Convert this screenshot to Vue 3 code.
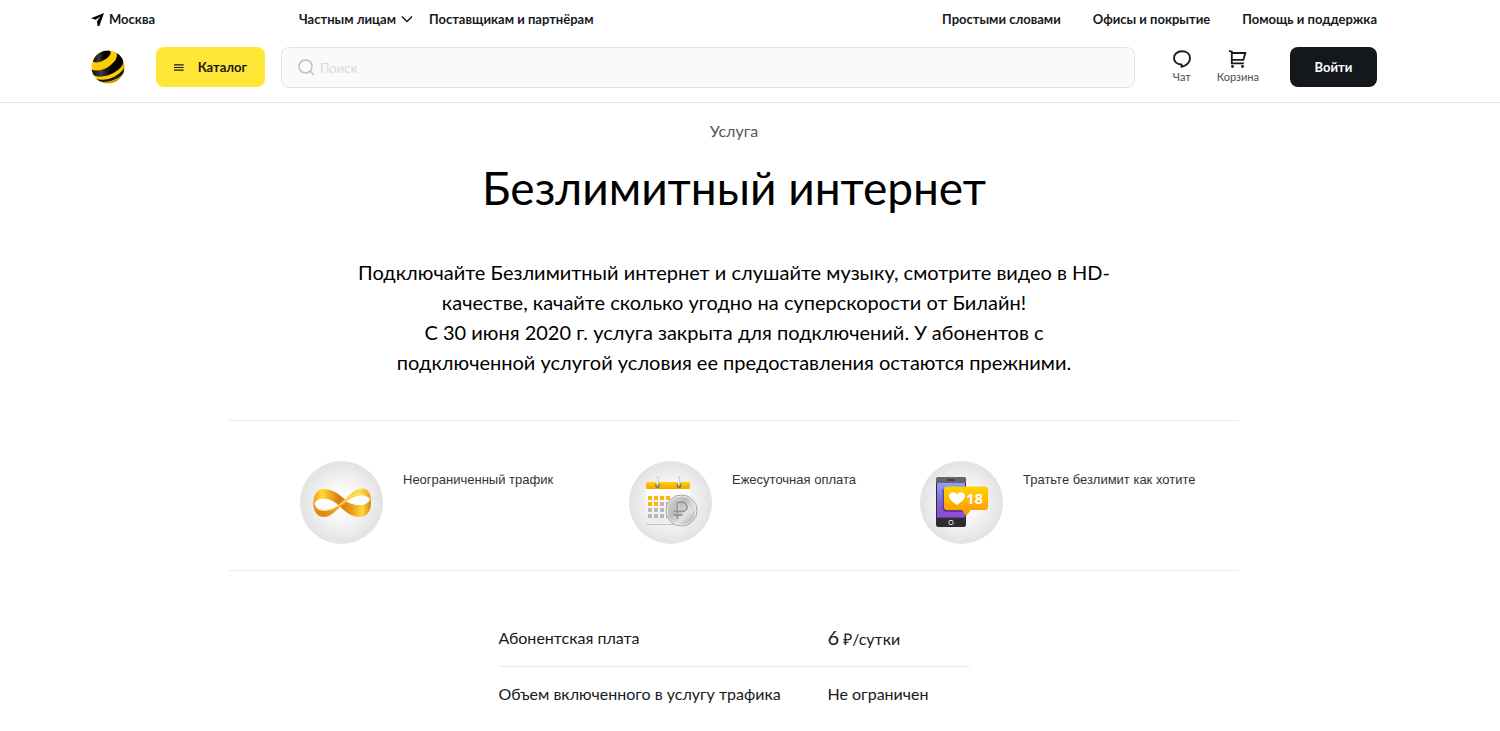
<script setup>
import { ref } from 'vue'

const query = ref('')
const mainLinks = ['Простыми словами', 'Офисы и покрытие', 'Помощь и поддержка']
const steps = [0, 1, 2, 3]
const days = steps.flatMap((row) =>
  steps.map((col) => ({ x: 19 + col * 6, y: 35 + row * 6, paid: row === 0 || (row === 1 && col < 2) }))
)
</script>

<template>
  <div class="page">
    <header class="header">
      <nav class="topbar">
        <a href="#" class="city">
          <svg width="13" height="13" viewBox="0 0 13 13" aria-hidden="true">
            <path d="M13 0 0 5.300l4.800 1.500L9.500 3.300 6 8.200l.6 4.800H8.300z" fill="#000" />
          </svg>
          Москва
        </a>
        <a href="#" class="audience">
          Частным лицам
          <svg width="12" height="8" viewBox="0 0 12 8" aria-hidden="true">
            <path d="m1 1.500 5 5 5-5" fill="none" stroke="#16191d" stroke-width="1.500" />
          </svg>
        </a>
        <a href="#">Поставщикам и партнёрам</a>
        <div class="links">
          <a v-for="link in mainLinks" :key="link" href="#">{{ link }}</a>
        </div>
      </nav>

      <div class="mainbar">
        <a href="#" class="logo" aria-label="Билайн">
          <svg width="34" height="34" viewBox="0 0 34 34">
            <defs>
              <radialGradient id="ballShade" cx=".42" cy=".4" r=".62">
                <stop offset=".8" stop-color="#000" stop-opacity="0" />
                <stop offset="1" stop-color="#000" stop-opacity=".3" />
              </radialGradient>
              <linearGradient id="ballBlack" x1="0" y1="0" x2="1" y2="0">
                <stop offset="0" stop-color="#000" />
                <stop offset=".3" stop-color="#3c3c3c" />
                <stop offset=".65" stop-color="#000" />
              </linearGradient>
              <clipPath id="ballClip"><circle cx="17" cy="17" r="16.500" /></clipPath>
            </defs>
            <g clip-path="url(#ballClip)">
              <rect width="34" height="34" fill="#ffcb05" />
              <path d="M2 11.500C4 4 10 .3 17 .3c3.500.5 3.500 3.500 0 7C13 11 6 14 2 11.500z" fill="url(#ballBlack)" />
              <path d="M0 19.500c6 2.500 13 .5 18.500-3.500C24 12 27 7.500 25.500 3L31 6.500c3.500 5.500 0 11.500-7 15.500-8 5-18 6.500-23 2z" fill="url(#ballBlack)" />
              <path d="M4 28.500c10 3.500 22-.5 29.500-10.500l-.5 5C25 31 14 33.500 6.500 31z" fill="#161616" />
              <path d="M6.500 30.500C14 33.500 22 32 29 27l-5 5.500-10 1z" fill="#ffcb05" />
              <circle cx="17" cy="17" r="16.500" fill="url(#ballShade)" />
            </g>
          </svg>
        </a>
        <button type="button" class="catalog">
          <svg width="13" height="9" viewBox="0 0 13 9" aria-hidden="true">
            <path d="M0 1h13M0 4.500h13M0 8h13" stroke="#16191d" stroke-width="1.600" />
          </svg>
          Каталог
        </button>
        <label class="search">
          <svg width="17" height="17" viewBox="0 0 17 17" aria-hidden="true">
            <circle cx="7.500" cy="7.500" r="6.500" fill="none" stroke="#bfbcc6" stroke-width="1.500" />
            <path d="m12 12 4 4" stroke="#bfbcc6" stroke-width="1.500" />
          </svg>
          <input v-model="query" type="search" placeholder="Поиск" aria-label="Поиск" />
        </label>
        <div class="actions">
          <a href="#" class="action">
            <svg width="20" height="20" viewBox="0 0 20 20" aria-hidden="true">
              <path d="M9.500 17.800v-2.300C5 15.500 2 12.700 2 9c0-3.900 3.200-6.700 8-6.700S18 5.100 18 9c0 4.300-3.500 7.500-8.500 8.800z" fill="none" stroke="#16191d" stroke-width="1.900" stroke-linejoin="round" />
            </svg>
            Чат
          </a>
          <a href="#" class="action">
            <svg width="20" height="20" viewBox="0 0 20 20" aria-hidden="true">
              <path d="m1 1.800 2.800.8v11.700h12M3.800 4h13.500l-1.900 6.800H3.800" fill="none" stroke="#16191d" stroke-width="1.800" />
              <circle cx="4.500" cy="17.500" r="1.400" fill="#16191d" />
              <circle cx="14.500" cy="17.500" r="1.400" fill="#16191d" />
            </svg>
            Корзина
          </a>
        </div>
        <button type="button" class="login">Войти</button>
      </div>
    </header>

    <main class="content">
      <p class="kind">Услуга</p>
      <h1>Безлимитный интернет</h1>
      <p class="lead">
        Подключайте Безлимитный интернет и слушайте музыку, смотрите видео в HD-<br />
        качестве, качайте сколько угодно на суперскорости от Билайн!<br />
        С 30 июня 2020 г. услуга закрыта для подключений. У абонентов с<br />
        подключенной услугой условия ее предоставления остаются прежними.
      </p>

      <ul class="features">
        <li>
          <svg class="pic" width="83" height="83" viewBox="0 0 83 83" aria-hidden="true">
            <defs>
              <radialGradient id="disc"><stop offset="0" stop-color="#fff" /><stop offset=".4" stop-color="#f8f8f8" /><stop offset="1" stop-color="#e2e2e2" /></radialGradient>
              <linearGradient id="goldA" x1="0" y1="0" x2="1" y2="0">
                <stop offset="0" stop-color="#efa41b" /><stop offset=".15" stop-color="#ffdc30" /><stop offset=".45" stop-color="#d47a12" /><stop offset=".65" stop-color="#e9961a" /><stop offset=".85" stop-color="#ffd93a" /><stop offset="1" stop-color="#d98212" />
              </linearGradient>
              <linearGradient id="goldB" x1="0" y1="0" x2="1" y2="0">
                <stop offset="0" stop-color="#d98212" /><stop offset=".2" stop-color="#e08c12" /><stop offset=".5" stop-color="#f7b822" /><stop offset=".8" stop-color="#ffe04a" /><stop offset="1" stop-color="#e9a01c" />
              </linearGradient>
            </defs>
            <circle cx="41.500" cy="41.500" r="41.500" fill="url(#disc)" />
            <path d="M13.500 42C13 33 18 28 24 28c9 0 16 6 21 10.500C50 43 55 44 60 44c6 0 9-3 10.500-6l.5 4c0 9-5 14-11 14-10 0-16-7-20-10.500C35 41 29 37 22 37.500c-4 .5-7.500 3.500-8 6.500z" fill="url(#goldA)" />
            <path d="M13.300 40C14 45 18 49 24 49c8 0 13-3.500 17-7 7-6 13-14.500 21-14.500 6 0 9 4.500 9 12.500-1-3-4-5.500-9-5.500-8 0-15 6.500-22 11.500-5 5-10 10-16 10-7 0-11-6-10.700-16z" fill="url(#goldB)" />
            <path d="M15 43c2-4 5-5.500 9-5 6 .5 10 3 14 6-5 4-10 5-14 5-5 0-8-2.500-9-6zM46 40.500c5-4 10-6 15-6s8 2.500 7 5.500c-2 3.500-6 4.500-11 3.800-5-.8-8-1.800-11-3.300z" fill="#fcfcfc" />
            <path d="M15 46c6 6 18 4 26-3.500C49 35 56 31 65 34" fill="none" stroke="#ffe889" />
          </svg>
          <span>Неограниченный трафик</span>
        </li>
        <li>
          <svg class="pic" width="83" height="83" viewBox="0 0 83 83" aria-hidden="true">
            <defs>
              <linearGradient id="coin" x1="0" y1="0" x2="1" y2="1"><stop offset="0" stop-color="#d8d8d8" /><stop offset=".4" stop-color="#bcbcbc" /><stop offset=".65" stop-color="#e2e2e2" /><stop offset="1" stop-color="#8f8f8f" /></linearGradient>
              <linearGradient id="bar" x1="0" y1="0" x2="0" y2="1"><stop offset="0" stop-color="#ffd000" /><stop offset="1" stop-color="#f5a400" /></linearGradient>
              <linearGradient id="sheet" x1="0" y1="0" x2="0" y2="1"><stop offset="0" stop-color="#fff" /><stop offset="1" stop-color="#ececec" /></linearGradient>
            </defs>
            <circle cx="41.500" cy="41.500" r="41.500" fill="url(#disc)" />
            <path d="M17 27h44v36H17z" fill="url(#sheet)" />
            <path d="M17 63.500h32" stroke="#c4c4c4" />
            <rect x="17" y="21" width="44" height="7" rx="1" fill="url(#bar)" />
            <rect v-for="(day, i) in days" :key="i" :x="day.x" :y="day.y" width="4" height="4" :fill="day.paid ? '#ffb400' : '#b7b7b7'" />
            <g fill="none" stroke="#777" stroke-width="1.500">
              <ellipse cx="28.500" cy="24.500" rx="1.500" ry="2" />
              <ellipse cx="50" cy="24.500" rx="1.500" ry="2" />
            </g>
            <path d="M28.500 17v6M50 17v6" stroke="#ccc" stroke-width="2.500" stroke-linecap="round" />
            <path d="M28 17v6M49.500 17v6" stroke="#fff" />
            <circle cx="52.500" cy="49.500" r="15.500" fill="url(#coin)" stroke="#a2a2a2" />
            <circle cx="52.500" cy="49.500" r="14.500" fill="none" stroke="#eee" />
            <path d="M49.500 58V42h5a4.500 4.500 0 0 1 0 9H45.500M45.500 54.500h9" fill="none" stroke="#eee" stroke-width="1.500" />
            <path d="M48.500 58V41.500h5a4.500 4.500 0 0 1 0 9H44.500M44.500 54h9" fill="none" stroke="#969696" stroke-width="1.800" />
          </svg>
          <span>Ежесуточная оплата</span>
        </li>
        <li>
          <svg class="pic" width="83" height="83" viewBox="0 0 83 83" aria-hidden="true">
            <defs>
              <linearGradient id="screen" x1="0" y1="0" x2="0" y2="1"><stop offset="0" stop-color="#8ca0ff" /><stop offset=".6" stop-color="#8060d0" /><stop offset="1" stop-color="#a14bea" /></linearGradient>
              <linearGradient id="bubble" x1="0" y1="0" x2="0" y2="1"><stop offset="0" stop-color="#ffd200" /><stop offset="1" stop-color="#ff9300" /></linearGradient>
            </defs>
            <circle cx="41.500" cy="41.500" r="41.500" fill="url(#disc)" />
            <rect x="16" y="16" width="30" height="50" rx="2.500" fill="#2d2d2f" />
            <path d="M16 22v-3.500q0-2.500 2.500-2.500h25q2.500 0 2.500 2.500V22z" fill="#66666a" />
            <path d="M27 19h8" stroke="#333" stroke-width="1.500" />
            <rect x="17" y="22" width="28" height="34.500" fill="url(#screen)" />
            <path d="M17 48 45 32v24.500H17z" fill="#7150c5" opacity=".35" />
            <path d="M22.500 28v19q0 4 4 4H45v-3H27V28z" fill="#352452" opacity=".5" />
            <rect x="29" y="59.500" width="4" height="4" rx="1" fill="none" stroke="#ddd" />
            <path d="M27 25.500h38a3 3 0 0 1 3 3V46a3 3 0 0 1-3 3H51l-5 6-4-6H27a3 3 0 0 1-3-3V28.500a3 3 0 0 1 3-3z" fill="url(#bubble)" />
            <path d="M37 44c-4-3-8-5.500-8-9 0-4.500 6-5 8-1.500C39 30 45 30.500 45 35c0 3.500-4 6-8 9z" fill="#fff" />
            <text x="46" y="43" class="count">18</text>
          </svg>
          <span>Тратьте безлимит как хотите</span>
        </li>
      </ul>

      <table class="params">
        <tbody>
          <tr>
            <th scope="row">Абонентская плата</th>
            <td><span class="price">6</span> ₽/сутки</td>
          </tr>
          <tr>
            <th scope="row">Объем включенного в услугу трафика</th>
            <td>Не ограничен</td>
          </tr>
        </tbody>
      </table>
    </main>
  </div>
</template>

<style>
body {
  margin: 0;
  background: #fff;
}
</style>

<style scoped>
.page {
  font-family: Lato, "Liberation Sans", sans-serif;
  color: #16191d;
}
.page * {
  box-sizing: border-box;
}
a {
  color: inherit;
  text-decoration: none;
}
button {
  border: 0;
  font: inherit;
  cursor: pointer;
}
.header {
  padding: 10px 123px 14px 91px;
  border-bottom: 1px solid #e2e2e2;
}
.topbar {
  display: flex;
  align-items: center;
  font-size: 13px;
  font-weight: 700;
  line-height: 18px;
}
.city {
  display: flex;
  align-items: center;
  gap: 5px;
  width: 208px;
}
.audience {
  display: flex;
  align-items: center;
  gap: 5px;
  margin-right: 16px;
}
.links {
  display: flex;
  gap: 32px;
  margin-left: auto;
}
.mainbar {
  display: flex;
  align-items: flex-start;
  margin-top: 19px;
}
.logo {
  display: flex;
  align-items: center;
  width: 65px;
  height: 40px;
}
.catalog {
  display: flex;
  align-items: center;
  gap: 14px;
  height: 40px;
  width: 109px;
  padding: 0 18px;
  border-radius: 8px;
  background: #ffe636;
  color: #16191d;
  font-size: 13px;
  font-weight: 700;
}
.search {
  display: flex;
  align-items: center;
  gap: 5px;
  flex: 1;
  height: 41px;
  margin-left: 16px;
  padding: 0 16px;
  border: 1px solid #e4e4e6;
  border-radius: 8px;
  background: #fafafa;
}
.search input {
  flex: 1;
  min-width: 0;
  padding: 0;
  border: 0;
  outline: 0;
  background: transparent;
  font: inherit;
  font-size: 13px;
}
.search input::placeholder {
  color: #d9d9df;
  opacity: 1;
}
.actions {
  display: flex;
  gap: 25px;
  margin: 2px 31px 0 37px;
}
.action {
  display: flex;
  flex-direction: column;
  align-items: center;
  font-size: 11px;
  line-height: 16px;
  color: #4b5057;
}
.login {
  width: 87px;
  height: 40px;
  border-radius: 8px;
  background: #14171b;
  color: #fff;
  font-size: 13px;
  font-weight: 700;
}
.content {
  width: 1010px;
  max-width: 100%;
  margin: 0 auto;
  position: relative;
  right: 16px;
  text-align: center;
}
.kind {
  margin: 17px 0 0;
  font-size: 16px;
  line-height: 22px;
  color: #55585c;
}
h1 {
  margin: 18px 0 0;
  font-size: 46px;
  font-weight: 400;
  line-height: 56px;
  color: #000;
}
.lead {
  margin: 41px 0 0;
  font-size: 20px;
  line-height: 30px;
  color: #000;
}
.features {
  display: grid;
  grid-template-columns: 329fr 291fr 319fr;
  margin: 43px 0 0;
  padding: 40px 0 26px 71px;
  border: solid #ebebeb;
  border-width: 1px 0;
  list-style: none;
  text-align: left;
  font-family: "Liberation Sans", Arial, sans-serif;
  font-size: 13px;
  line-height: 20px;
  color: #333;
}
.features li {
  display: flex;
  gap: 20px;
}
.features span {
  margin-top: 9px;
}
.pic {
  flex: none;
}
.count {
  font: 700 15px "Noto Sans", sans-serif;
  fill: #fff;
}
.params {
  width: 471px;
  margin: 39px auto 0;
  border-collapse: collapse;
  text-align: left;
  font-size: 16px;
  line-height: 24px;
}
.params th,
.params td {
  height: 56px;
  padding: 0;
  font-weight: 400;
}
.params th {
  width: 329px;
}
.params tr + tr th,
.params tr + tr td {
  border-top: 1px solid #eae9e5;
}
.price {
  font-size: 20px;
}
</style>
